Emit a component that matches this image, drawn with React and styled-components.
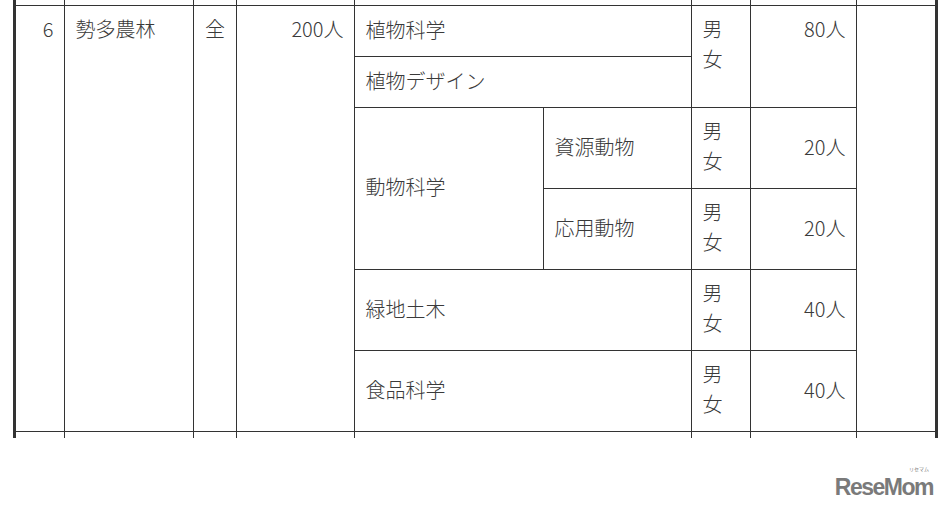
import React from "react";
import styled, { createGlobalStyle } from "styled-components";

const GlobalStyle = createGlobalStyle`
  html, body {
    margin: 0;
    padding: 0;
    background: #fff;
  }
  body {
    font-family: "Noto Sans CJK JP", "Noto Sans", sans-serif;
  }
`;

const Page = styled.div`
  width: 948px;
  height: 508px;
  overflow: hidden;
  background: #fff;
  display: flex;
  flex-direction: column;
`;

const Frame = styled.div`
  margin-left: 13px;
  width: 919px;
  border-left: 3px solid #333;
  border-right: 3px solid #333;
`;

const Table = styled.table`
  width: 919px;
  table-layout: fixed;
  border-collapse: collapse;
  border-style: hidden;
`;

const Row = styled.tr`
  height: ${(p) => p.$h}px;
`;

const Cell = styled.td`
  border: 1px solid #333;
  padding: ${(p) => (p.$valign === "top" ? "8px 10px 0 11px" : "0 10px 3px 11px")};
  font-size: 20px;
  line-height: 30px;
  color: #3a3a3a;
  font-weight: 300;
  text-align: ${(p) => p.$align || "left"};
  vertical-align: ${(p) => p.$valign || "middle"};
  white-space: nowrap;
`;

const EdgeCell = styled.td`
  border: 1px solid #333;
  padding: 0;
  height: ${(p) => p.$h}px;
  font-size: 0;
  line-height: 0;
`;

const Sex = styled.div`
  display: flex;
  flex-direction: column;
`;

const Footer = styled.div`
  display: flex;
  justify-content: flex-end;
  padding: 38px 15px 0 0;
`;

const Logo = styled.div`
  position: relative;
  font-family: "Liberation Sans", Arial, sans-serif;
  font-weight: 700;
  font-size: 23px;
  letter-spacing: -1.5px;
  color: #7a7a7a;
  line-height: 22px;

  .kana {
    position: absolute;
    right: 4px;
    top: -10px;
    font-family: "Noto Sans CJK JP", sans-serif;
    font-size: 5px;
    letter-spacing: 0;
    line-height: 5px;
    font-weight: 400;
  }
`;

const widths = [48, 129, 43, 118, 189, 148, 59, 106, 79];

const MaleFemale = () => (
  <Sex>
    <span>男</span>
    <span>女</span>
  </Sex>
);

const EdgeRow = ({ h }) => (
  <tr>
    <EdgeCell $h={h} />
    <EdgeCell $h={h} />
    <EdgeCell $h={h} />
    <EdgeCell $h={h} />
    <EdgeCell $h={h} colSpan={2} />
    <EdgeCell $h={h} />
    <EdgeCell $h={h} />
    <EdgeCell $h={h} />
  </tr>
);

const courses = [
  { name: "緑地土木", count: "40人" },
  { name: "食品科学", count: "40人" },
];

export default function App() {
  return (
    <>
      <GlobalStyle />
      <Page>
        <Frame>
          <Table>
            <colgroup>
              {widths.map((w, i) => (
                <col key={i} style={{ width: w }} />
              ))}
            </colgroup>
            <tbody>
              <EdgeRow h={5} />
              <Row $h={51}>
                <Cell rowSpan={6} $align="right" $valign="top">6</Cell>
                <Cell rowSpan={6} $valign="top">勢多農林</Cell>
                <Cell rowSpan={6} $align="center" $valign="top">全</Cell>
                <Cell rowSpan={6} $align="right" $valign="top">200人</Cell>
                <Cell colSpan={2}>植物科学</Cell>
                <Cell rowSpan={2} $valign="top"><MaleFemale /></Cell>
                <Cell rowSpan={2} $align="right" $valign="top">80人</Cell>
                <Cell rowSpan={6} />
              </Row>
              <Row $h={51}>
                <Cell colSpan={2}>植物デザイン</Cell>
              </Row>
              <Row $h={81}>
                <Cell rowSpan={2}>動物科学</Cell>
                <Cell>資源動物</Cell>
                <Cell $valign="top"><MaleFemale /></Cell>
                <Cell $align="right">20人</Cell>
              </Row>
              <Row $h={81}>
                <Cell>応用動物</Cell>
                <Cell $valign="top"><MaleFemale /></Cell>
                <Cell $align="right">20人</Cell>
              </Row>
              {courses.map((c) => (
                <Row $h={81} key={c.name}>
                  <Cell colSpan={2}>{c.name}</Cell>
                  <Cell $valign="top"><MaleFemale /></Cell>
                  <Cell $align="right">{c.count}</Cell>
                </Row>
              ))}
              <EdgeRow h={6} />
            </tbody>
          </Table>
        </Frame>
        <Footer>
          <Logo>
            ReseMom
            <span className="kana">リセマム</span>
          </Logo>
        </Footer>
      </Page>
    </>
  );
}
